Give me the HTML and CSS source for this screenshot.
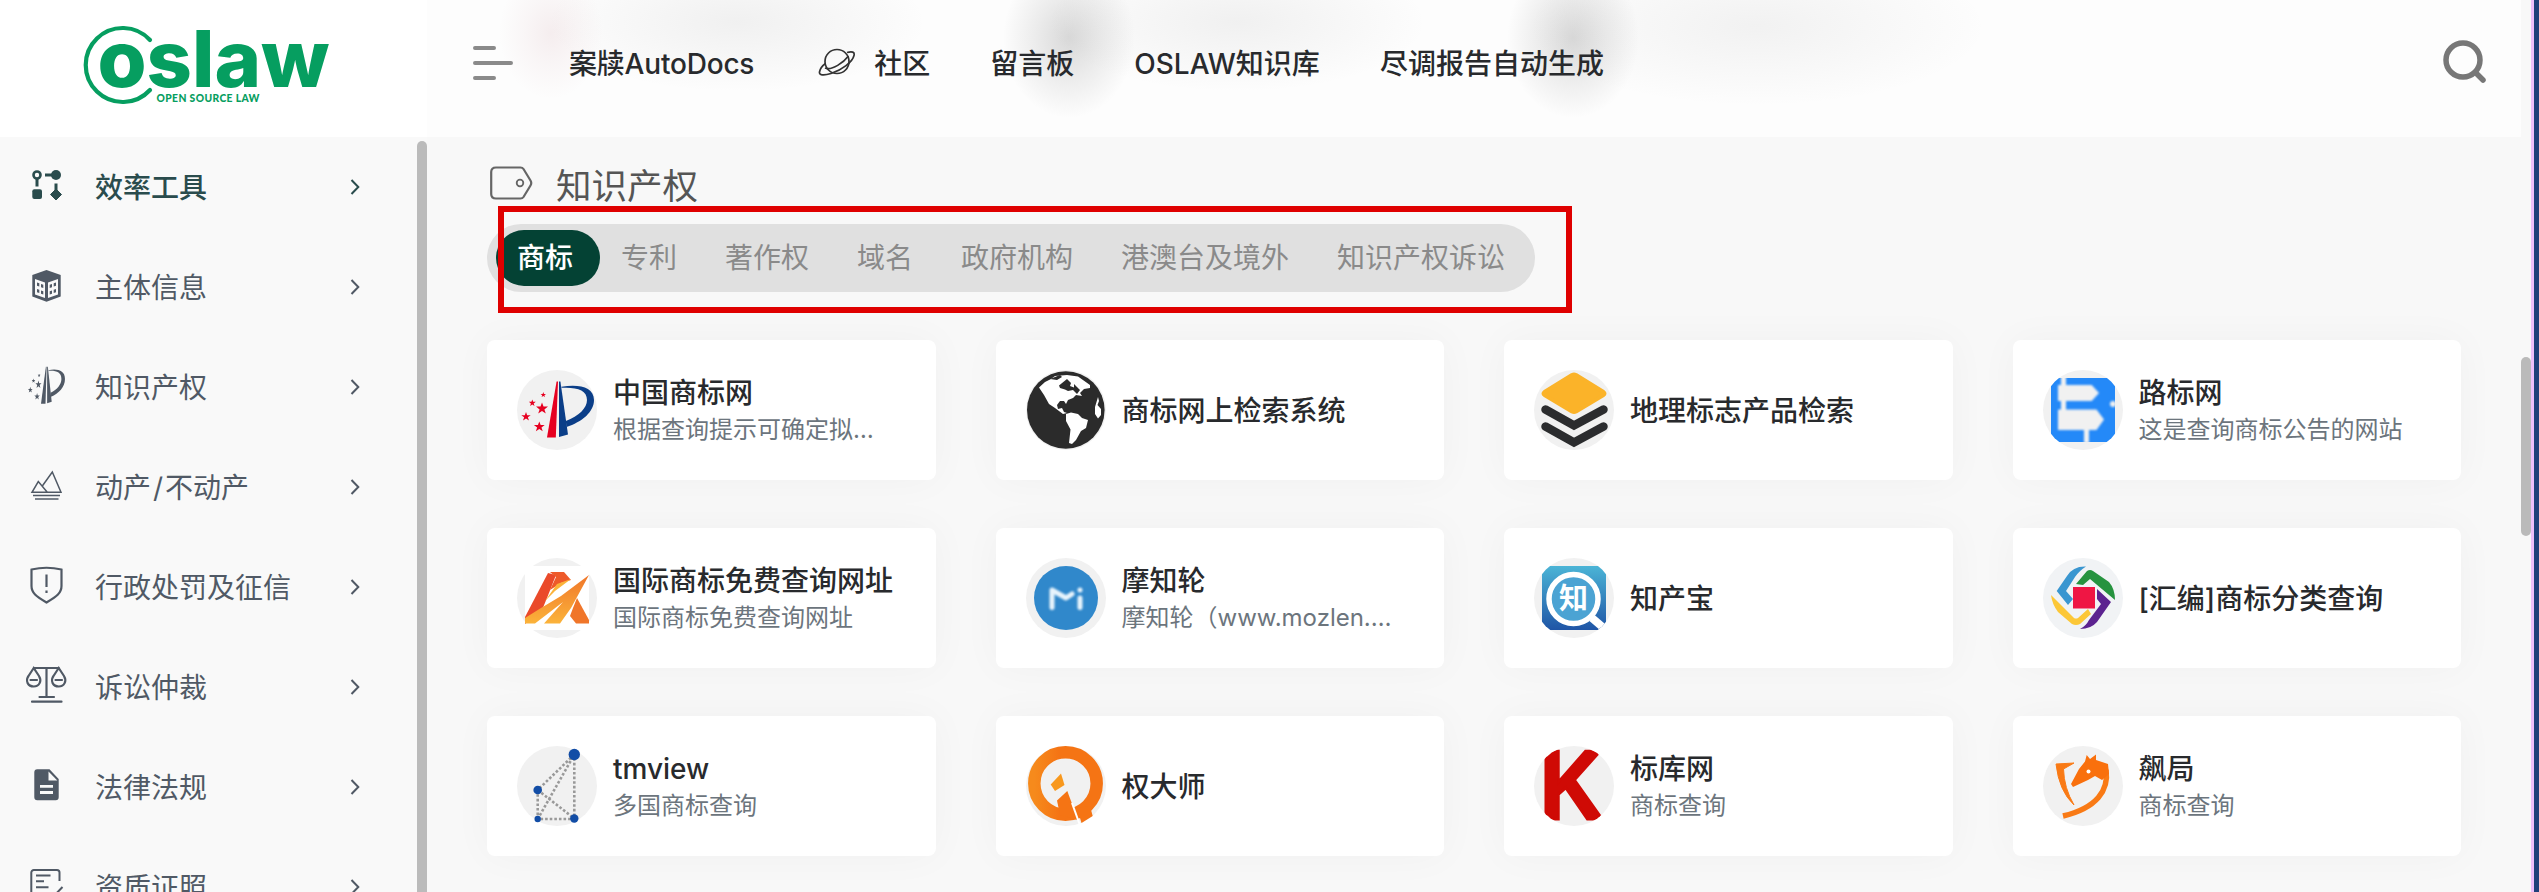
FILE: index.html
```html
<!DOCTYPE html>
<html lang="zh-CN">
<head>
<meta charset="utf-8">
<title>OSLAW</title>
<link rel="stylesheet" href="styles.css">
</head>
<body>
<svg class="defs" width="0" height="0" aria-hidden="true">
  <defs>
    <clipPath id="round"><circle cx="40" cy="40" r="40"/></clipPath>
    <linearGradient id="sky" x1="0" y1="0" x2="0" y2="1"><stop offset="0" stop-color="#4bb4d6"/><stop offset="1" stop-color="#1f55a6"/></linearGradient>
    <linearGradient id="flame" x1="0" y1="0" x2="0" y2="1"><stop offset="0" stop-color="#f0762a"/><stop offset="1" stop-color="#fbb33a"/></linearGradient>
    <linearGradient id="amber" x1="0" y1="0" x2="1" y2="0"><stop offset="0" stop-color="#f68a1c"/><stop offset=".4" stop-color="#f57414"/></linearGradient>
    <polygon id="star" points="0,-6 1.5,-2 6,-2 2.4,.8 3.8,5 0,2.4 -3.8,5 -2.4,.8 -6,-2 -1.5,-2"/>
    <symbol id="patent" viewBox="0 0 80 80">
      <g class="pat-red">
        <path d="M39.6 11.5L30 67.5H38.8L41 11.5Z"/>
        <use href="#star" transform="translate(25 38.6)"/>
        <use href="#star" transform="translate(15.3 33) scale(.58)"/>
        <use href="#star" transform="translate(9 46.7) scale(.78)"/>
        <use href="#star" transform="translate(22.3 56.8) scale(.9)"/>
        <use href="#star" transform="translate(26.3 24.8) scale(.45)"/>
      </g>
      <g class="pat-blue">
        <path d="M42 11.5L43.4 11.5L51 64.5L42 67Z"/>
        <path d="M44.5 16.8C62 14 77 17 77 30C77 42 65 52 49.5 57L48.8 51C62 46 70 38 70 30C70 20 60 17 44.5 17.8Z"/>
      </g>
    </symbol>
  </defs>
</svg>
<div class="screen">
  <div class="app">
    <header class="header">
      <div class="brand">
        <svg width="260" height="110" viewBox="0 0 260 110">
          <path d="M70 40A37 37 0 1 0 70 90" fill="none" stroke="#069e60" stroke-width="4.2" stroke-linecap="round"/>
          <text class="wordmark" x="17.500" y="87" textLength="232" lengthAdjust="spacingAndGlyphs">oslaw</text>
          <text class="tagline" x="76.500" y="101.500" textLength="103">OPEN SOURCE LAW</text>
        </svg>
      </div>
      <nav class="nav">
        <svg class="burger" width="40" height="34" viewBox="0 0 40 34"><g stroke="#8a8a8a" stroke-width="4" stroke-linecap="round"><path d="M2 2H21M2 17H38M2 32H21"/></g></svg>
        <a class="nav-link nav-docs">案牍AutoDocs</a>
        <a class="nav-link nav-planet"><svg width="38" height="28" viewBox="0 0 38 28" fill="none" stroke="#333" stroke-width="1.7"><circle cx="19" cy="13.500" r="12"/><path d="M29 4.500C34 3 37 4 36 7.500C34.500 14 24 22 13 25.500C5 28 1 27 1.500 24C2 21 4 18 7.500 15.500M7 20C14 23 26 14 30.500 8"/></svg>社区</a>
        <a class="nav-link">留言板</a>
        <a class="nav-link">OSLAW知识库</a>
        <a class="nav-link">尽调报告自动生成</a>
        <svg class="search" width="44" height="44" viewBox="0 0 44 44" fill="none" stroke="#777" stroke-linecap="round"><circle cx="20" cy="20" r="17" stroke-width="5.500"/><path d="M34 34L40 40" stroke-width="5.500"/></svg>
      </nav>
    </header>
    <div class="body">
      <aside class="sidebar">
        <ul class="menu">
          <li class="item current"><svg class="ico" viewBox="0 0 44 44"><circle cx="13" cy="10" r="3.500" fill="none" stroke="currentColor" stroke-width="2.600"/><path d="M13 14V21.500M21 10H29M32 18.500V26" stroke="currentColor" stroke-width="3"/><circle cx="32" cy="10" r="5"/><rect x="8.300" y="24.300" width="9.700" height="9.700" rx="2"/><path d="M32 24L37.500 29.500L32 35L26.500 29.500Z" stroke="currentColor" stroke-linejoin="round"/></svg><span>效率工具</span><svg class="chev" viewBox="0 0 10 16"><path d="M1.500 1L8.300 8L1.500 15"/></svg></li>
          <li class="item"><svg class="ico" viewBox="0 0 44 44"><path d="M22.500 5L36.700 10V31.500L22.500 36.700L8.300 31.500V10Z"/><path d="M11 14L21 17.500V33L11 29.500ZM34 14L24 17.500V33L34 29.500Z" fill="#f9f9f9"/><path d="M13 17.500l2.300.8v3.300l-2.300-.8zM17 19l2.300.8v3.300L17 22.300zM13 24l2.300.8v3.300l-2.300-.8zM17 25.500l2.300.8v3.300L17 28.800zM32 17.500l-2.300.8v3.300l2.300-.8zM28 19l-2.300.8v3.300l2.300-.8zM32 24l-2.300.8v3.300l2.300-.8zM28 25.500l-2.300.8v3.300l2.300-.8z"/></svg><span>主体信息</span><svg class="chev" viewBox="0 0 10 16"><path d="M1.500 1L8.300 8L1.500 15"/></svg></li>
          <li class="item"><svg class="ico" viewBox="0 0 44 44"><g transform="translate(1.700 -5.900) scale(.51 .66)"><use href="#patent" width="80" height="80"/></g></svg><span>知识产权</span><svg class="chev" viewBox="0 0 10 16"><path d="M1.500 1L8.300 8L1.500 15"/></svg></li>
          <li class="item"><svg class="ico line" viewBox="0 0 44 44" stroke-width="1.500"><path d="M18.500 20.700L28.300 7L37 27.300H8L14.300 16.500L23.300 27.300M9 30.500H36M11 34H34.500"/></svg><span>动产<i>/</i>不动产</span><svg class="chev" viewBox="0 0 10 16"><path d="M1.500 1L8.300 8L1.500 15"/></svg></li>
          <li class="item"><svg class="ico line" viewBox="0 0 44 44" stroke-width="2.200"><path d="M7.500 4.500Q22.500 1 37.500 4.500V21C37.500 28 33 31 22.500 37.500C12 31 7.500 28 7.500 21ZM22.500 9.500V22M22.500 25.500V28"/></svg><span>行政处罚及征信</span><svg class="chev" viewBox="0 0 10 16"><path d="M1.500 1L8.300 8L1.500 15"/></svg></li>
          <li class="item"><svg class="ico line" viewBox="0 0 44 44" stroke-width="2.200" stroke-linecap="round"><path d="M9.700 3H35M22.500 3V32M15.500 32H30M8 36.700H37.500M9.700 3L4.500 11C1 16 4 21.500 9.700 21.500S18 16 15 11ZM34.700 3L29.500 11C26 16 29 21.500 34.700 21.500S43 16 40 11ZM6.500 15H13M31.500 15H38"/></svg><span>诉讼仲裁</span><svg class="chev" viewBox="0 0 10 16"><path d="M1.500 1L8.300 8L1.500 15"/></svg></li>
          <li class="item"><svg class="ico" viewBox="0 0 44 44"><path d="M13.300 4.300H25.500L34.700 14V32.300A3 3 0 0 1 31.700 35.300H13.300A3 3 0 0 1 10.300 32.300V7.300A3 3 0 0 1 13.300 4.300Z"/><path d="M24.500 6.500V15.500H33.300Z" fill="#f9f9f9"/><path d="M16 21.300H29M16 27.500H29" stroke="#f9f9f9" stroke-width="2.800"/></svg><span>法律法规</span><svg class="chev" viewBox="0 0 10 16"><path d="M1.500 1L8.300 8L1.500 15"/></svg></li>
          <li class="item"><svg class="ico line" viewBox="0 0 44 44" stroke-width="2"><path d="M35.500 16V7.500A2.500 2.500 0 0 0 33 5H10A2.500 2.500 0 0 0 7.300 7.500V36H18M12 10.500H26.500M12 16.300H20M12 22.300H24.500M38.500 22L27 34L25 38"/></svg><span>资质证照</span><svg class="chev" viewBox="0 0 10 16"><path d="M1.500 1L8.300 8L1.500 15"/></svg></li>
        </ul>
        <div class="side-scroll"></div>
      </aside>
      <main class="main">
        <h2 class="title"><svg width="44" height="34" viewBox="0 0 44 34" fill="none" stroke="#666" stroke-width="2.200"><path d="M7 1.500H31.500Q33.500 1.500 34.500 3L41.500 14.500Q43 17 41.500 19.500L34.500 31Q33.500 32.500 31.500 32.500H7Q2.200 32.500 2.200 28V6Q2.200 1.500 7 1.500Z"/><circle cx="31" cy="17" r="3.300" stroke-width="1.800"/></svg>知识产权</h2>
        <div class="tabs">
          <span class="tab on">商标</span><span class="tab">专利</span><span class="tab">著作权</span><span class="tab">域名</span><span class="tab">政府机构</span><span class="tab">港澳台及境外</span><span class="tab">知识产权诉讼</span>
          <div class="marker"></div>
        </div>
        <div class="grid">
          <div class="card"><svg class="logo" viewBox="0 0 80 80"><circle cx="40" cy="40" r="40" fill="#f1f1f1"/><use class="patent-color" href="#patent" width="80" height="80"/></svg><div class="txt"><b>中国商标网</b><p>根据查询提示可确定拟<span class="dots">…</span></p></div></div>
          <div class="card"><svg class="logo" viewBox="0 0 80 80"><circle cx="40" cy="40" r="40" fill="#f1f1f1"/><circle cx="39.800" cy="40" r="38.800" fill="#2b2b2b"/><g fill="#fff"><path d="M13 17.500L19 12L25 9L29 6L41 5L52 6.500L64 15L64 18L58 19L54 23L56 26L50 25L47 28L42 30L40 34L38 31L34 31L31 35L32 39L36 38L38 42L41 43L37 44L29 38L23 34L18 25Z"/><path d="M40 44L45 42.500L52 44L56 48L62 50L60 58L55 61L50 70L46 74L43 73L44.500 59.500L40 51Z"/><path d="M72 27L73 31L71.500 35L75 39V45L72 48.500L69 44L69 37Z"/></g><path d="M33 15.500L41 9L45 13L44 16L48 17.500L48 14L54 20L51 24L47 20L42 21L39 19.500L34 18ZM24 9L31 10L36 7L34 5Z" fill="#2b2b2b"/></svg><div class="txt"><b>商标网上检索系统</b></div></div>
          <div class="card"><svg class="logo" viewBox="0 0 80 80"><circle cx="40" cy="40" r="40" fill="#f1f1f1"/><path d="M38 5Q40 4 42 5L69.500 22Q71.500 23.500 69.500 25L42 41.500Q40 42.500 38 41.500L10.500 25Q8.500 23.500 10.500 22Z" fill="#fbb329" stroke="#fbb329" stroke-width="4" stroke-linejoin="round"/><g fill="none" stroke="#2b2c2e" stroke-width="8.500" stroke-linecap="round"><path d="M11.500 39.500L40 55.500L69.500 39.500M11.500 56.500L40 72.500L69.500 56.500"/></g></svg><div class="txt"><b>地理标志产品检索</b></div></div>
          <div class="card"><svg class="logo" viewBox="0 0 80 80"><circle cx="40" cy="40" r="40" fill="#f1f1f1"/><g clip-path="url(#round)"><path d="M8 8H72V72H8Z" fill="#2489f8"/><g class="soft" fill="#f1f1f1"><path d="M18 6H23V42H18ZM41 58H46V73H41Z"/><path d="M15 15H48.700L56 23L48.700 31H15ZM15 39.500H53.500L61 49.500L53.500 60H15Z"/><circle cx="70" cy="34" r="3"/></g></g></svg><div class="txt"><b>路标网</b><p>这是查询商标公告的网站</p></div></div>

          <div class="card"><svg class="logo" viewBox="0 0 80 80"><circle cx="40" cy="40" r="40" fill="#f1f1f1"/><path d="M8 8H72V72H8Z" fill="#fff"/><g class="soft2"><path d="M31 15L39 17L30 40L25 52L8 66V59Z" fill="#ea4a2a"/><path d="M33 14H47L54 22L44 25L33 32L39 19Z" fill="#ee5a2a"/><path d="M40 26L54 21L38 33L28 43Z" fill="#fbb33a"/><path d="M72 17L54 50L43 65.500H27L46 44L18 65.500H8V60L24 50L44 38Z" fill="url(#flame)"/><path d="M60 40L72 62V65.500H59L53 58L56 50Z" fill="#f0762a"/></g></svg><div class="txt"><b>国际商标免费查询网址</b><p>国际商标免费查询网址</p></div></div>
          <div class="card"><svg class="logo" viewBox="0 0 80 80"><circle cx="40" cy="40" r="40" fill="#f1f1f1"/><circle cx="40" cy="40" r="32" fill="#3088cb"/><g class="soft" fill="none" stroke="#e8f4fc" stroke-width="5" stroke-linecap="round" stroke-linejoin="round"><path d="M26 49.500V32L40 40L46 36M54 40V49.500M54 32V32.100"/></g></svg><div class="txt"><b>摩知轮</b><p>摩知轮（www.mozlen.…</p></div></div>
          <div class="card"><svg class="logo" viewBox="0 0 80 80"><circle cx="40" cy="40" r="40" fill="#f1f1f1"/><g clip-path="url(#round)"><path d="M8 8H72V72H8Z" fill="url(#sky)"/><circle cx="39.500" cy="41" r="24.500" fill="#4ba3d3" stroke="#fff" stroke-width="5.500"/><path d="M58 60L72 72" stroke="#fff" stroke-width="8"/><text class="glyph" x="39.500" y="51" text-anchor="middle">知</text></g></svg><div class="txt"><b>知产宝</b></div></div>
          <div class="card"><svg class="logo" viewBox="0 0 80 80"><circle cx="40" cy="40" r="40" fill="#f1f3f5"/><path d="M30 29H52V50.500H30Z" fill="#ef1644"/><path d="M43 8.500Q30 8 24 18L13.700 33L25 47L30 41L23 33L32 19Q36 13 43 8.500Z" fill="#3a96d0"/><path d="M33 26L44 13Q47 11 50 13L66 24Q72 31 72 42L47 21L40 27Z" fill="#26933f"/><path d="M54 31L68 44L54 64Q48 71 37 71Q43 68 46 62L58 46L54 41Z" fill="#5c2390"/><path d="M8 37L31 60Q33 61 35 60L45 51L48 56L37 66Q33 68 29 66L15 54Q9 46 8 37Z" fill="#fcc737"/></svg><div class="txt"><b>[汇编]商标分类查询</b></div></div>

          <div class="card"><svg class="logo" viewBox="0 0 80 80"><circle cx="40" cy="40" r="40" fill="#f1f1f1"/><path d="M57.300 8.500L20.700 44V73H57.300V8.500L20.700 73M20.700 44L57.300 72.500" fill="none" stroke="#999" stroke-width="2.600" stroke-dasharray="2.600 2"/><g fill="#124da6"><circle cx="57.300" cy="8.500" r="5.700"/><circle cx="20.700" cy="44" r="4.300"/><circle cx="20.700" cy="73" r="3.200"/><circle cx="57.300" cy="72.500" r="4.200"/></g></svg><div class="txt"><b>tmview</b><p>多国商标查询</p></div></div>
          <div class="card"><svg class="logo" viewBox="0 0 80 80"><circle cx="40" cy="40" r="40" fill="#f1f1f1"/><circle cx="39.500" cy="37.500" r="31.200" fill="none" stroke="url(#amber)" stroke-width="12.500"/><path d="M35 27.500L38.500 39L29 45L24.700 38.500Z" fill="#f8981d"/><path d="M41.300 45L52 74L34 69L31 54.500Z" fill="#f57414"/><path d="M51 62L55.500 77L66.700 70L64 60Z" fill="#f57414"/><path d="M46 57L53.500 78" stroke="#fff" stroke-width="2"/></svg><div class="txt"><b>权大师</b></div></div>
          <div class="card"><svg class="logo" viewBox="0 0 80 80"><circle cx="40" cy="40" r="40" fill="#f1f1f1"/><g clip-path="url(#round)"><text class="letter-k" x="6" y="73" textLength="63" lengthAdjust="spacingAndGlyphs">K</text></g></svg><div class="txt"><b>标库网</b><p>商标查询</p></div></div>
          <div class="card"><svg class="logo" viewBox="0 0 80 80"><circle cx="40" cy="40" r="40" fill="#f1f1f1"/><g class="soft2"><path d="M13 18L31 17L20.500 23Q21 42 31 59Q16 45 13 18Z" fill="#f97a15" stroke="#f97a15"/><path d="M63 24C66 44 54 62 20 70" fill="none" stroke="#f97a15" stroke-width="5.500"/><path d="M28 38L36 23L42 15.500L43.700 9L47 13L53 8.500V14L65 18L66 28L59 34L52 30L45 34L30 41Z" fill="#f9700d"/><circle cx="45.500" cy="25.500" r="2" fill="#fff"/></g></svg><div class="txt"><b>飙局</b><p>商标查询</p></div></div>
        </div>
      </main>
    </div>
    <div class="page-scroll"></div>
  </div>
  <div class="edge"></div>
</div>
</body>
</html>
```
FILE: styles.css
```css
* { box-sizing: border-box; }
body, ul, h2, p { margin: 0; padding: 0; }
body {
  font-family: Inter, "Noto Sans CJK SC", sans-serif;
  color: #282a2d;
  overflow: hidden;
}
.defs { position: absolute; }
.screen { display: flex; width: 2539px; height: 892px; overflow: hidden; }
.app {
  position: relative;
  display: flex;
  flex-direction: column;
  width: 2531px;
  background: #f8f8f8;
}
.edge {
  width: 8px;
  background: #1f4079;
  border-left: 3px solid #eec0fa;
}

/* top bar */
.header { display: flex; width: 2521px; height: 137px; background: #fdfdfd; }
.brand { width: 427px; padding: 0 0 0 80px; background: #fff; }
.wordmark {
  font: 800 78px Inter, sans-serif;
  fill: #069e60;
}
.tagline { font: 900 10.300px Lato, sans-serif; fill: #069e60; }
.nav {
  flex: 1;
  display: flex;
  align-items: center;
  height: 137px;
  padding: 0 34px 13px 46px;
  font-size: 28px;
  font-weight: 500;
  white-space: nowrap;
  background:
    radial-gradient(ellipse 52px 66px at 124px 33px, rgba(190, 130, 140, .13), rgba(190, 130, 140, .06) 50%, transparent),
    radial-gradient(ellipse 66px 80px at 642px 38px, rgba(60, 60, 60, .19), rgba(60, 60, 60, .09) 50%, transparent),
    radial-gradient(ellipse 66px 80px at 1146px 38px, rgba(60, 60, 60, .19), rgba(60, 60, 60, .09) 50%, transparent),
    radial-gradient(ellipse 190px 70px at 310px 22px, rgba(90, 90, 90, .08), transparent),
    radial-gradient(ellipse 190px 70px at 810px 22px, rgba(90, 90, 90, .08), transparent),
    radial-gradient(ellipse 230px 80px at 1330px 26px, rgba(90, 90, 90, .07), transparent);
}
.burger { margin: 2px 56px 0 0; }
.nav-link { margin-right: 60px; }
.nav-docs { letter-spacing: -.2px; }
.nav-planet { display: flex; align-items: center; gap: 18px; margin-left: 4px; }
.search { margin-left: auto; margin-top: -1px; }

/* side menu */
.body { display: flex; height: 755px; }
.sidebar {
  display: flex;
  width: 427px;
  height: 755px;
  background: #f9f9f9;
  overflow: hidden;
}
.menu { width: 417px; list-style: none; }
.item {
  display: flex;
  align-items: center;
  height: 100px;
  padding: 0 57px 0 24px;
  font-size: 28px;
  color: #505965;
}
.item.current { color: #2a4c4d; font-weight: 500; }
.item span { flex: 1; margin: -3px 0 0 27px; }
.item i { font-style: normal; padding: 0 2px; }
.ico { width: 44px; height: 44px; fill: currentColor; }
.ico.line { fill: none; stroke: currentColor; }
.chev { width: 10px; height: 16px; fill: none; stroke: currentColor; stroke-width: 2; }
.side-scroll {
  width: 10px;
  margin-top: 4px;
  height: 760px;
  border-radius: 5px;
  background: #bbb;
}

/* content */
.main { width: 2034px; padding: 15px 0 0 60px; }
.title {
  display: flex;
  align-items: center;
  gap: 23px;
  height: 62px;
  margin-bottom: 10px;
  padding-left: 2px;
  font-size: 35.500px;
  font-weight: 400;
  color: #555;
}
.tabs {
  position: relative;
  display: flex;
  width: 1048px;
  height: 68px;
  padding: 6px 0 6px 9px;
  border-radius: 34px;
  background: #e0e0e0;
  font-size: 28px;
  line-height: 56px;
  color: #8a8a8a;
  white-space: nowrap;
}
.tab { flex: none; padding: 0 24px; }
.tab.on {
  width: 104px;
  margin-right: -3px;
  padding: 0 0 0 21px;
  color: #fff;
  font-weight: 500;
  background: #044234;
  border-radius: 28px;
}
.tab.on + .tab { padding-left: 24px; }
/* highlight frame drawn over the tab bar */
.marker {
  position: absolute;
  left: 11px;
  top: -18px;
  width: 1074px;
  height: 107px;
  border: 6px solid #df0000;
}
.grid {
  display: grid;
  grid-template-columns: repeat(4, 1fr);
  grid-auto-rows: 140px;
  gap: 48px 60px;
  margin-top: 48px;
}
.card {
  display: flex;
  align-items: center;
  gap: 16px;
  padding: 0 30px;
  border-radius: 8px;
  background: #fff;
  box-shadow: 0 0 40px rgba(0, 0, 0, .035);
}
.logo { flex: none; width: 80px; height: 80px; }
.txt { padding-top: 1px; white-space: nowrap; }
.txt b { display: block; font-size: 28px; font-weight: 500; line-height: 38px; }
.txt p { font-size: 24px; line-height: 36px; color: #6c757d; }
.dots { letter-spacing: 0; }
.patent-color { --tower: #e60020; --arch: #0b3e88; }
.pat-red { fill: var(--tower, currentColor); }
.pat-blue { fill: var(--arch, currentColor); }
.soft { filter: blur(1px); }
.soft2 { filter: blur(.7px); }
.glyph { font: 700 29px "Noto Sans CJK SC", sans-serif; fill: #fff; }
.letter-k {
  font: 700 98px "Liberation Sans", sans-serif;
  fill: #cf0a05;
  stroke: #cf0a05;
  stroke-width: 3px;
}

.page-scroll {
  position: absolute;
  right: 0;
  top: 357px;
  width: 10px;
  height: 179px;
  border-radius: 5px;
  background: #bababa;
}
```
